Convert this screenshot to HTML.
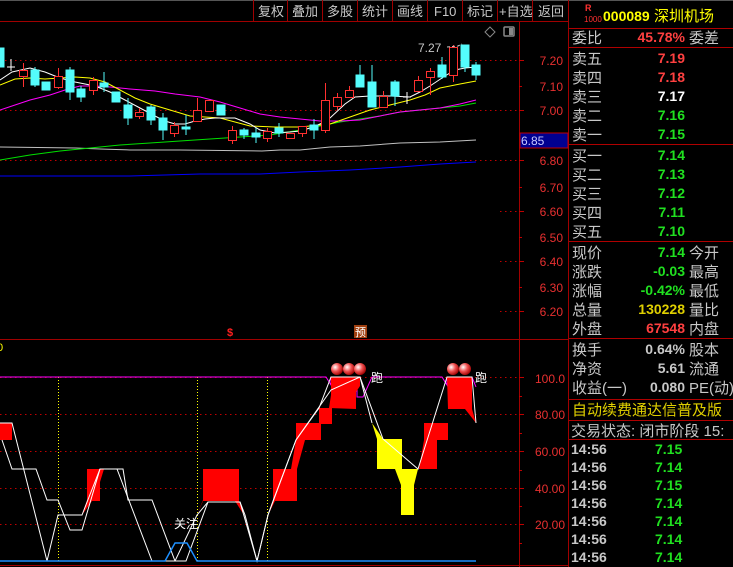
<!DOCTYPE html>
<html><head><meta charset="utf-8"><style>
html,body{margin:0;padding:0;background:#000;width:733px;height:567px;overflow:hidden}
svg{display:block}
text{font-family:"Liberation Sans","Noto Sans CJK SC",sans-serif}
.t{fill:#c8c8c8;font-size:13px}
.l{fill:#c8c8c8;font-size:15px}
.n{font-size:14px;font-weight:bold;text-anchor:end}
.ax{fill:#e83030;font-size:12px;text-anchor:end}
</style></head><body>
<svg width="733" height="567" viewBox="0 0 733 567" xmlns="http://www.w3.org/2000/svg">
<rect width="733" height="567" fill="#000"/>
<line x1="0" y1="0.5" x2="733" y2="0.5" stroke="#555"/>
<!-- toolbar -->
<g stroke="#a00000" stroke-width="1">
<line x1="253.5" y1="0" x2="253.5" y2="21"/><line x1="287.5" y1="0" x2="287.5" y2="21"/><line x1="322.5" y1="0" x2="322.5" y2="21"/><line x1="357.5" y1="0" x2="357.5" y2="21"/><line x1="392.5" y1="0" x2="392.5" y2="21"/><line x1="427.5" y1="0" x2="427.5" y2="21"/><line x1="462.5" y1="0" x2="462.5" y2="21"/><line x1="497.5" y1="0" x2="497.5" y2="21"/><line x1="532.5" y1="0" x2="532.5" y2="21"/>
<line x1="0" y1="21.5" x2="569" y2="21.5"/>
<line x1="519.5" y1="21" x2="519.5" y2="567"/>
<line x1="568.5" y1="0" x2="568.5" y2="567"/>
<line x1="0" y1="339.5" x2="569" y2="339.5"/>
<line x1="0" y1="565.5" x2="569" y2="565.5"/>
</g>
<g class="t">
<text x="258" y="16">复权</text><text x="292" y="16">叠加</text><text x="327" y="16">多股</text><text x="362" y="16">统计</text><text x="397" y="16">画线</text><text x="434" y="16">F10</text><text x="467" y="16">标记</text><text x="499" y="16">+自选</text><text x="538" y="16">返回</text>
</g>
<!-- grid dotted -->
<g stroke="#c00000" stroke-dasharray="1.5,3.5">
<line x1="0" y1="60.5" x2="519" y2="60.5"/><line x1="0" y1="110.5" x2="519" y2="110.5"/><line x1="0" y1="160.5" x2="519" y2="160.5"/>
<line x1="500" y1="211.5" x2="519" y2="211.5"/><line x1="500" y1="261.5" x2="519" y2="261.5"/><line x1="500" y1="311.5" x2="519" y2="311.5"/>
<line x1="0" y1="377.5" x2="519" y2="377.5"/><line x1="0" y1="414.5" x2="519" y2="414.5"/><line x1="0" y1="451.5" x2="519" y2="451.5"/><line x1="0" y1="488.5" x2="519" y2="488.5"/><line x1="0" y1="524.5" x2="519" y2="524.5"/>
</g>
<g stroke="#c00000">
<line x1="519" y1="60.5" x2="524" y2="60.5"/><line x1="519" y1="86.5" x2="522" y2="86.5"/><line x1="519" y1="110.5" x2="524" y2="110.5"/><line x1="519" y1="160.5" x2="524" y2="160.5"/><line x1="519" y1="187.5" x2="522" y2="187.5"/><line x1="519" y1="211.5" x2="524" y2="211.5"/><line x1="519" y1="237.5" x2="522" y2="237.5"/><line x1="519" y1="261.5" x2="524" y2="261.5"/><line x1="519" y1="287.5" x2="522" y2="287.5"/><line x1="519" y1="311.5" x2="524" y2="311.5"/>
<line x1="519" y1="377.5" x2="524" y2="377.5"/><line x1="519" y1="396.5" x2="522" y2="396.5"/><line x1="519" y1="414.5" x2="524" y2="414.5"/><line x1="519" y1="433.5" x2="522" y2="433.5"/><line x1="519" y1="451.5" x2="524" y2="451.5"/><line x1="519" y1="470.5" x2="522" y2="470.5"/><line x1="519" y1="488.5" x2="524" y2="488.5"/><line x1="519" y1="506.5" x2="522" y2="506.5"/><line x1="519" y1="524.5" x2="524" y2="524.5"/><line x1="519" y1="543.5" x2="522" y2="543.5"/>
</g>
<g class="ax">
<text x="563" y="65">7.20</text><text x="563" y="91">7.10</text><text x="563" y="115">7.00</text><text x="563" y="165">6.80</text><text x="563" y="192">6.70</text><text x="563" y="216">6.60</text><text x="563" y="242">6.50</text><text x="563" y="266">6.40</text><text x="563" y="292">6.30</text><text x="563" y="316">6.20</text>
<text x="565" y="383">100.0</text><text x="565" y="419">80.00</text><text x="565" y="456">60.00</text><text x="565" y="493">40.00</text><text x="565" y="529">20.00</text>
</g>
<rect x="520" y="133" width="48" height="15" fill="#000090" stroke="#c00000"/>
<text x="521" y="145" fill="#c8c8ff" font-size="12">6.85</text>
<!-- icons -->
<path d="M490 27 L495 32 L490 37 L485 32 Z" fill="none" stroke="#888"/>
<rect x="504" y="27" width="10" height="9" rx="1" fill="none" stroke="#888" stroke-width="1.5"/><rect x="509" y="28" width="4" height="7" fill="#888"/>
<!-- MAs -->
<g fill="none" stroke-width="1">
<polyline stroke="#0000ff" points="0,176 130,176 200,174 260,174 300,172 350,170 400,167 440,164 476,162"/>
<polyline stroke="#c0c0c0" points="0,147 76,148 100,149 130,150 180,150 262,151 280,150 300,150 330,147 360,146 400,143 440,142 476,140"/>
<polyline stroke="#00e000" points="0,160 30,155 60,151 90,148 120,145 150,143 180,141 210,139 240,137 270,135 300,130 320,126 340,122 360,119 380,116 400,112 420,110 440,108 460,106 476,103"/>
<polyline stroke="#ff00ff" points="0,110 15,105 30,100 50,95 65,90 80,86 95,86 110,87 130,89 155,91 175,94 200,97 220,102 240,108 260,114 280,117 300,119 320,121 340,121 360,120 380,116 400,112 420,110 440,108 460,104 476,100"/>
<polyline stroke="#ffff00" points="0,85 15,79 30,78 45,79 60,78 75,77 90,78 105,82 120,90 135,98 150,104 170,110 190,116 220,118 250,126 275,127 300,127 330,124 350,117 370,110 390,105 410,100 425,95 440,88 460,84 476,81"/>
<polyline stroke="#ffffff" points="0,80 12,72 30,68 45,72 60,78 75,82 95,86 110,92 125,100 140,108 155,116 165,121 175,124 185,124 195,121 205,119 215,118 235,118 250,124 260,130 275,133 290,132 300,131 310,128 320,124 330,118 345,104 355,97 370,96 390,96 410,97 420,92 430,86 445,76 455,70 465,68 476,67"/>
</g>
<!-- candles -->
<g id="c">
<!-- cyan filled: x,top,bot,wt,wb -->
<g fill="#54fcfc" stroke="#54fcfc">
<rect x="-2" y="48" width="6" height="19"/>
<line x1="35" y1="67" x2="35" y2="87"/><rect x="31" y="70" width="8" height="15"/>
<rect x="42" y="82" width="8" height="8"/>
<line x1="70" y1="67" x2="70" y2="100"/><rect x="66" y="70" width="8" height="22"/>
<line x1="81" y1="86" x2="81" y2="102"/><rect x="77" y="89" width="8" height="8"/>
<line x1="104" y1="72" x2="104" y2="92"/><rect x="100" y="83" width="8" height="4"/>
<rect x="112" y="92" width="8" height="10"/>
<line x1="128" y1="98" x2="128" y2="125"/><rect x="124" y="105" width="8" height="13"/>
<line x1="151" y1="105" x2="151" y2="125"/><rect x="147" y="107" width="8" height="13"/>
<line x1="163" y1="113" x2="163" y2="140"/><rect x="159" y="118" width="8" height="12"/>
<line x1="186" y1="115" x2="186" y2="135"/><rect x="182" y="127" width="8" height="2"/>
<rect x="217" y="105" width="8" height="10"/>
<line x1="244" y1="128" x2="244" y2="139"/><rect x="240" y="130" width="8" height="5"/>
<line x1="256" y1="128" x2="256" y2="143"/><rect x="252" y="133" width="8" height="4"/>
<line x1="279" y1="123" x2="279" y2="137"/><rect x="275" y="128" width="8" height="5"/>
<line x1="314" y1="119" x2="314" y2="139"/><rect x="310" y="125" width="8" height="5"/>
<line x1="360" y1="65" x2="360" y2="87"/><rect x="356" y="75" width="8" height="12"/>
<line x1="372" y1="65" x2="372" y2="107"/><rect x="368" y="82" width="8" height="25"/>
<line x1="395" y1="80" x2="395" y2="106"/><rect x="391" y="82" width="8" height="14"/>
<line x1="442" y1="57" x2="442" y2="79"/><rect x="438" y="65" width="8" height="12"/>
<line x1="465" y1="45" x2="465" y2="72"/><rect x="461" y="45" width="8" height="22"/>
<line x1="476" y1="62" x2="476" y2="80"/><rect x="472" y="65" width="8" height="10"/>
</g>
<g fill="none" stroke="#ff3030">
<line x1="23.5" y1="63" x2="23.5" y2="87"/><rect x="19.5" y="70.5" width="8" height="6" fill="#000"/>
<line x1="58.5" y1="68" x2="58.5" y2="89"/><rect x="54.5" y="76.5" width="8" height="11" fill="#000"/>
<line x1="93.5" y1="77" x2="93.5" y2="95"/><rect x="89.5" y="80.5" width="8" height="10" fill="#000"/>
<line x1="139.5" y1="108" x2="139.5" y2="119"/><rect x="135.5" y="112.5" width="8" height="4" fill="#000"/>
<line x1="174.5" y1="122" x2="174.5" y2="137"/><rect x="170.5" y="125.5" width="8" height="8" fill="#000"/>
<line x1="197.5" y1="98" x2="197.5" y2="122"/><rect x="193.5" y="110.5" width="8" height="11" fill="#000"/>
<rect x="205.5" y="100.5" width="8" height="11" fill="#000"/>
<line x1="232.5" y1="126" x2="232.5" y2="144"/><rect x="228.5" y="130.5" width="8" height="10" fill="#000"/>
<line x1="267.5" y1="128" x2="267.5" y2="142"/><rect x="263.5" y="131.5" width="8" height="7" fill="#000"/>
<rect x="286.5" y="133.5" width="8" height="5" fill="#000"/>
<line x1="302.5" y1="126" x2="302.5" y2="137"/><rect x="298.5" y="126.5" width="8" height="7" fill="#000"/>
<line x1="325.5" y1="83" x2="325.5" y2="133"/><rect x="321.5" y="100.5" width="8" height="30" fill="#000"/>
<line x1="337.5" y1="93" x2="337.5" y2="110"/><rect x="333.5" y="97.5" width="8" height="9" fill="#000"/>
<line x1="349.5" y1="86" x2="349.5" y2="97"/><rect x="345.5" y="90.5" width="8" height="7" fill="#000"/>
<line x1="383.5" y1="91" x2="383.5" y2="107"/><rect x="379.5" y="96.5" width="8" height="11" fill="#000"/>
<line x1="418.5" y1="76" x2="418.5" y2="92"/><rect x="414.5" y="80.5" width="8" height="11" fill="#000"/>
<line x1="430.5" y1="68" x2="430.5" y2="95"/><rect x="426.5" y="71.5" width="8" height="6" fill="#000"/>
<line x1="453.5" y1="45" x2="453.5" y2="82"/><rect x="449.5" y="47.5" width="8" height="28" fill="#000"/>
</g>
<g stroke="#fff"><line x1="11" y1="59" x2="11" y2="71"/><line x1="7" y1="67" x2="15" y2="67"/><line x1="407" y1="92" x2="407" y2="104"/><line x1="403" y1="97" x2="411" y2="97"/></g>
</g>
<text x="418" y="52" fill="#c8c8c8" font-size="12">7.27</text>
<polyline points="447,47 458,46 462,44" fill="none" stroke="#c8c8c8" stroke-dasharray="3,2"/>
<!-- markers -->
<text x="227" y="336" fill="#ff2020" font-size="11" font-weight="bold">$</text>
<rect x="354" y="325" width="13" height="13" fill="#a04010"/><text x="355" y="336" fill="#fff" font-size="11">预</text>
<text x="-3" y="351" fill="#ffff00" font-size="11">0</text>
<!-- indicator -->
<g stroke="#ffff00" stroke-dasharray="1,2"><line x1="58.5" y1="377" x2="58.5" y2="561"/><line x1="197.5" y1="377" x2="197.5" y2="561"/><line x1="267.5" y1="377" x2="267.5" y2="561"/></g>
<polyline fill="none" stroke="#ff00ff" points="0,377 326,377 331,385 331,377 357,377 357,397 363,397 372,377 442,377 447,385 447,377 472,377 476,387"/>
<g fill="#ff0000">
<rect x="0" y="423" width="12" height="17"/>
<polygon points="82,515 87,500 87,469 104,469 100,482 100,501 92,501"/>
<polygon points="197,515 203,500 203,469 239,469 239,501 244,515 235,501 203,501"/>
<rect x="273" y="469" width="24" height="32"/>
<polygon points="268,515 273,501 297,501 297,469 291,469"/>
<polygon points="291,469 296,440 296,423 321,423 321,440 305,440 297,469"/>
<rect x="319" y="408" width="13" height="16"/>
<polygon points="329,408 331,395 331,377 360,377 360,386 356,392 356,409"/>
<polygon points="419,469 424,440 424,423 448,423 448,409 447,377 472,377 472,409 476,423 465,409 448,409 448,440 437,440 437,469"/>
</g>
<polygon fill="#ffff00" points="372,423 383,439 402,439 402,469 395,469 395,469 377,469 377,439"/>
<polygon fill="#ffff00" points="395,469 418,469 414,485 414,515 401,515 401,485"/>
<g fill="none" stroke="#fff" stroke-width="1">
<polyline points="2,440 12,469 36,469 47,500 58,500 70,530 82,530 100,469 123,469 128,500 152,500 175,561 186,561 208,502 240,502 257,561 268,515 273,501 296,440 319,408 331,377 360,377 383,439 418,469 447,377 472,377 476,423"/>
<polyline points="0,423 12,423 47,561 58,515 82,515 100,469 117,469 152,561 175,561 197,515 208,502 240,502 245,515 257,561 268,515 296,440 331,390 360,377 372,423"/>
</g>
<polyline fill="none" stroke="#1e90ff" stroke-width="1.5" points="0,561 165,561 175,543 187,543 197,561 476,561"/>
<defs><radialGradient id="b" cx="0.35" cy="0.35" r="0.7"><stop offset="0" stop-color="#fff"/><stop offset="0.5" stop-color="#f05050"/><stop offset="1" stop-color="#a00000"/></radialGradient></defs>
<g fill="url(#b)"><circle cx="337" cy="369" r="6"/><circle cx="349" cy="369" r="6"/><circle cx="360" cy="369" r="6"/><circle cx="453" cy="369" r="6"/><circle cx="465" cy="369" r="6"/></g>
<g fill="#fff" font-size="12"><text x="371" y="382">跑</text><text x="475" y="382">跑</text><text x="174" y="528">关注</text></g>
<!-- right panel -->
<g stroke="#b00000">
<line x1="569" y1="28.5" x2="733" y2="28.5"/><line x1="569" y1="47.5" x2="733" y2="47.5"/><line x1="569" y1="144.5" x2="733" y2="144.5"/><line x1="569" y1="241.5" x2="733" y2="241.5"/><line x1="569" y1="338.5" x2="733" y2="338.5"/><line x1="569" y1="399.5" x2="733" y2="399.5"/><line x1="569" y1="420.5" x2="733" y2="420.5"/><line x1="569" y1="439.5" x2="733" y2="439.5"/>
</g>
<text x="585" y="11" fill="#ff3030" font-size="9" font-weight="bold">R</text><text x="584" y="22" fill="#ff3030" font-size="8">1000</text>
<text x="603" y="21" fill="#ffff00" font-size="14" font-weight="bold">000089</text><text x="654" y="21" fill="#ffff00" font-size="15">深圳机场</text>
<g class="l">
<text x="572" y="43">委比</text><text x="689" y="43">委差</text>
<text x="572" y="64">卖五</text><text x="572" y="83">卖四</text><text x="572" y="102">卖三</text><text x="572" y="121">卖二</text><text x="572" y="140">卖一</text>
<text x="572" y="161">买一</text><text x="572" y="180">买二</text><text x="572" y="199">买三</text><text x="572" y="218">买四</text><text x="572" y="237">买五</text>
<text x="572" y="258">现价</text><text x="572" y="277">涨跌</text><text x="572" y="296">涨幅</text><text x="572" y="315">总量</text><text x="572" y="334">外盘</text>
<text x="689" y="258">今开</text><text x="689" y="277">最高</text><text x="689" y="296">最低</text><text x="689" y="315">量比</text><text x="689" y="334">内盘</text>
<text x="572" y="355">换手</text><text x="572" y="374">净资</text><text x="572" y="393">收益(一)</text>
<text x="689" y="355">股本</text><text x="689" y="374">流通</text><text x="689" y="393">PE(动)</text>
<text x="571" y="436">交易状态: 闭市阶段 15:</text>
</g>
<text x="572" y="415" fill="#e0d000" font-size="15">自动续费通达信普及版</text>
<g class="n">
<text x="685" y="42" fill="#ff4040">45.78%</text>
<text x="685" y="63" fill="#ff4040">7.19</text><text x="685" y="82" fill="#ff4040">7.18</text><text x="685" y="101" fill="#fff">7.17</text><text x="685" y="120" fill="#20e020">7.16</text><text x="685" y="139" fill="#20e020">7.15</text>
<text x="685" y="160" fill="#20e020">7.14</text><text x="685" y="179" fill="#20e020">7.13</text><text x="685" y="198" fill="#20e020">7.12</text><text x="685" y="217" fill="#20e020">7.11</text><text x="685" y="236" fill="#20e020">7.10</text>
<text x="685" y="257" fill="#20e020">7.14</text><text x="685" y="276" fill="#20e020">-0.03</text><text x="685" y="295" fill="#20e020">-0.42%</text><text x="685" y="314" fill="#e0d000">130228</text><text x="685" y="333" fill="#ff4040">67548</text>
<text x="685" y="354" fill="#c8c8c8">0.64%</text><text x="685" y="373" fill="#c8c8c8">5.61</text><text x="685" y="392" fill="#c8c8c8">0.080</text>
</g>
<g font-size="14" font-weight="bold">
<g fill="#c8c8c8"><text x="571" y="454">14:56</text><text x="571" y="472">14:56</text><text x="571" y="490">14:56</text><text x="571" y="508">14:56</text><text x="571" y="526">14:56</text><text x="571" y="544">14:56</text><text x="571" y="562">14:56</text></g>
<g fill="#20e020"><text x="655" y="454">7.15</text><text x="655" y="472">7.14</text><text x="655" y="490">7.15</text><text x="655" y="508">7.14</text><text x="655" y="526">7.14</text><text x="655" y="544">7.14</text><text x="655" y="562">7.14</text></g>
</g>
</svg>
</body></html>
